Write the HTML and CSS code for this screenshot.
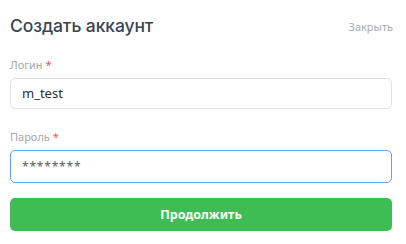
FILE: index.html
```html
<!DOCTYPE html>
<html>
  <head>
    <link rel="stylesheet" href="styles.css">
  </head>
  <body>
    <div class="modal">
      <div class="modal-header">
        <h1>Создать аккаунт</h1>
        <a class="close-link" href="#">Закрыть</a>
      </div>
      <div class="field">
        <label class="field-label">Логин <span class="req">*</span></label>
        <div class="input">m_test</div>
      </div>
      <div class="field">
        <label class="field-label">Пароль <span class="req">*</span></label>
        <div class="input input-focus">********</div>
      </div>
      <button class="submit-btn">Продолжить</button>
    </div>
  </body>
</html>
```

FILE: styles.css
```css
/* форма создания аккаунта */
body {
  margin: 0;
  font-family: "Noto Sans", Arial, sans-serif;
  background-color: #fff;
}
.modal {
  padding: 12px 14px 0 10px;
}
.modal-header {
  display: flex;
  justify-content: space-between;
  align-items: center;
  height: 26px;
}
.modal-header h1 {
  margin: 0;
  font-family: Inter, "Noto Sans", sans-serif;
  font-size: 17.5px;
  font-weight: 500;
  color: #3a4350;
  letter-spacing: -0.1px;
}
.close-link {
  font-size: 11px;
  color: #a9acb0;
  text-decoration: none;
  margin-right: -1px;
  margin-top: 2px;
}
.field {
  margin-top: 19px;
}
.field + .field {
  margin-top: 20px;
}
.field-label {
  display: block;
  font-size: 11px;
  color: #a3a6aa;
  line-height: 15px;
  margin-bottom: 6px;
}
.req {
  color: #f0504f;
}
.input {
  height: 29px;
  border: 1px solid #dfe3e8;
  border-radius: 5px;
  padding: 0 11px;
  font-size: 13px;
  line-height: 29px;
  color: #2c2f33;
}
.input-focus {
  height: 31px;
  line-height: 31px;
  border: 1.5px solid #5ba6ee;
  color: #5a5d61;
  font-size: 12px;
  letter-spacing: 0.8px;
}
.submit-btn {
  display: block;
  width: 100%;
  height: 33px;
  margin-top: 15px;
  background-color: #3fbd55;
  border: none;
  border-radius: 5px;
  color: #fff;
  font-family: "Noto Sans", Arial, sans-serif;
  font-size: 12.5px;
  font-weight: 700;
}
```
